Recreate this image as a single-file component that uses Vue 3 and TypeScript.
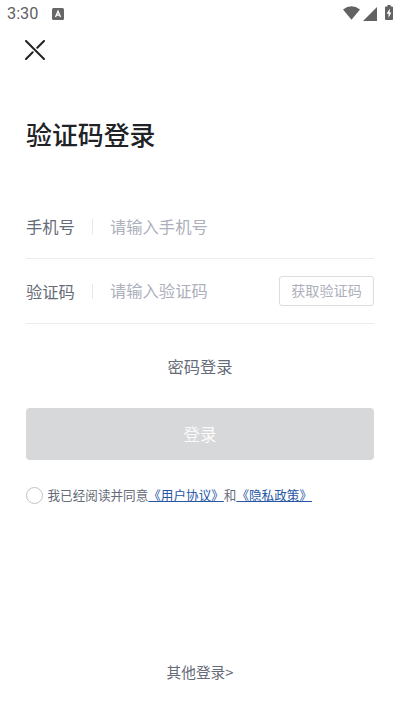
<script setup lang="ts">
import { ref } from 'vue'

const phone = ref('')
const code = ref('')
const agreed = ref(false)
</script>

<template>
  <main class="screen">
    <header class="status">
      <span class="time">3:30</span>
      <svg class="app-badge" width="12" height="12" viewBox="0 0 12 12">
        <rect width="12" height="12" rx="1.5" fill="#666" />
        <path d="M3.5 9 L6 3.2 L8.5 9 M4.4 7.2 H7.6" fill="none" stroke="#fff" stroke-width="1.3" />
      </svg>
      <svg class="wifi" width="17" height="14" viewBox="0 0 17 14">
        <path d="M0 3.4 Q8.5 -2.8 17 3.4 L8.5 13.7 Z" fill="#626262" />
      </svg>
      <svg class="signal" width="14" height="14" viewBox="0 0 14 14">
        <path d="M14 0 V14 H0 Z" fill="#626262" />
      </svg>
      <svg class="battery" width="8" height="15" viewBox="0 0 9 15" preserveAspectRatio="none">
        <path d="M2.7 0 H6.3 V1.4 H8 Q9 1.4 9 2.4 V14 Q9 15 8 15 H1 Q0 15 0 14 V2.4 Q0 1.4 1 1.4 H2.7 Z" fill="#626262" />
        <path d="M5.4 3.5 L1.8 8.8 H4 V12.8 L7.2 7.4 H5.2 Z" fill="#fff" />
      </svg>
    </header>

    <button class="close" aria-label="关闭">
      <svg width="20" height="20" viewBox="0 0 20 20" fill="none" stroke="#202226" stroke-width="2" stroke-linecap="round">
        <path d="M1 1 L19 19 M19 1 L12.3 7.7 M7.7 12.3 L1 19" />
      </svg>
    </button>

    <h1>验证码登录</h1>

    <form @submit.prevent>
      <div class="field">
        <label for="phone">手机号</label>
        <span class="divider"></span>
        <input id="phone" v-model="phone" type="tel" placeholder="请输入手机号" />
      </div>
      <div class="field">
        <label for="code">验证码</label>
        <span class="divider"></span>
        <input id="code" v-model="code" type="text" placeholder="请输入验证码" />
        <button class="get-code" type="button">获取验证码</button>
      </div>
      <button class="password-login" type="button">密码登录</button>
      <button class="submit" type="submit">登录</button>
    </form>

    <div class="agreement">
      <button class="radio" :class="{ checked: agreed }" role="checkbox" :aria-checked="agreed" @click="agreed = !agreed"></button>
      <p>我已经阅读并同意<a>《用户协议》</a>和<a>《隐私政策》</a></p>
    </div>

    <button class="other">其他登录&gt;</button>
  </main>
</template>

<style>
body {
  background: #fff;
}
</style>

<style scoped>
.screen {
  box-sizing: border-box;
  display: flex;
  flex-direction: column;
  height: 712px;
  padding: 0 26px;
  overflow: hidden;
  background: #fff;
  color: #666b78;
  font-family: "Noto Sans CJK SC", sans-serif;
}
button {
  margin: 0;
  padding: 0;
  border: 0;
  background: none;
  color: inherit;
  font: inherit;
}
.status {
  display: flex;
  align-items: center;
  height: 28px;
  margin: 0 -19px;
  flex: none;
}
.time {
  width: 45px;
  color: #626262;
  font: 16.3px/28px Roboto, sans-serif;
}
.wifi {
  margin-left: auto;
  margin-bottom: 2px;
}
.signal {
  margin-left: 3px;
  margin-bottom: 1px;
}
.battery {
  margin: 0 0 3px 8px;
}
.close {
  width: 20px;
  height: 20px;
  margin: 12px 0 0 -1px;
  flex: none;
}
.close svg {
  display: block;
}
h1 {
  margin: 54px 0 0;
  height: 40px;
  color: #202226;
  font-size: 25.9px;
  font-weight: 500;
  line-height: 40px;
}
form {
  display: flex;
  flex-direction: column;
  margin-top: 41px;
}
.field {
  box-sizing: border-box;
  display: flex;
  align-items: center;
  height: 64px;
  border-bottom: 1px solid #ececee;
  font-size: 16.3px;
}
.field + .field {
  height: 65px;
}
label {
  width: 66px;
  padding-bottom: 1px;
  line-height: 24px;
}
.divider {
  width: 1px;
  height: 15px;
  background: #e6e7ea;
}
input {
  flex: 1;
  min-width: 0;
  margin: 0 0 0 17px;
  padding: 0 0 2px;
  border: 0;
  outline: 0;
  background: none;
  color: #666b78;
  font: inherit;
  line-height: 24px;
}
input::placeholder {
  color: #adb0bb;
  opacity: 1;
}
.get-code {
  box-sizing: border-box;
  width: 95px;
  height: 30px;
  border: 1px solid #dcdde1;
  border-radius: 3px;
  color: #adb0bb;
  font-size: 14.1px;
  line-height: 27px;
  padding-bottom: 1px;
}
.password-login {
  align-self: center;
  height: 24px;
  margin-top: 30px;
  font-size: 16.3px;
  line-height: 24px;
}
.submit {
  height: 52px;
  margin-top: 30px;
  border-radius: 4px;
  background: #d7d8da;
  color: #fafafa;
  font-size: 16.5px;
  line-height: 52px;
}
.agreement {
  display: flex;
  align-items: center;
  height: 20px;
  margin-top: 25px;
}
.radio {
  box-sizing: border-box;
  width: 17px;
  height: 17px;
  border: 1px solid #c0c2c9;
  border-radius: 50%;
}
.radio.checked {
  border: 5px solid #2657a5;
}
p {
  margin: 0 0 1px 4.5px;
  font-size: 12.6px;
  line-height: 20px;
  white-space: nowrap;
}
a {
  color: #2657a5;
  text-decoration: underline;
}
.other {
  align-self: center;
  height: 22px;
  margin: auto 0 29px;
  font-size: 14.7px;
  line-height: 22px;
}
</style>
